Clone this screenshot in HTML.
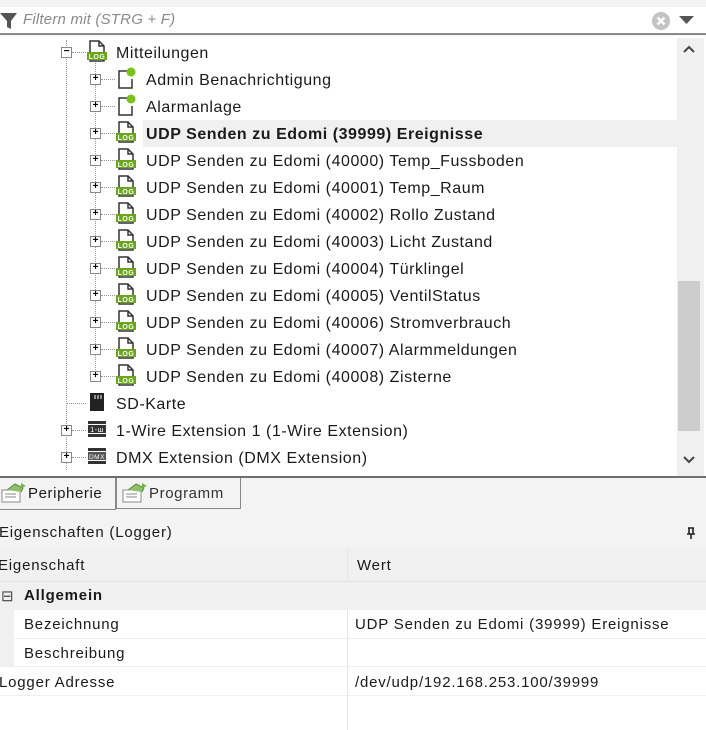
<!DOCTYPE html>
<html><head><meta charset="utf-8"><style>
*{margin:0;padding:0;box-sizing:border-box}
body{width:706px;height:730px;background:#f3f3f3;font-family:"Liberation Sans",sans-serif;font-size:16px;color:#1a1a1a;position:relative;overflow:hidden;letter-spacing:0.55px}
.a{position:absolute;white-space:nowrap}
.row{position:absolute;height:27px;line-height:27px;white-space:nowrap}
.exp{position:absolute;width:11px;height:11px;border:1px solid #888;background:#fff;font-size:10px;line-height:8px;text-align:center;color:#000;font-weight:bold;letter-spacing:0}
.hd{position:absolute;border-top:1px dotted #999;width:12px;height:0}
.p{font-size:15px;letter-spacing:0.8px}
</style></head><body>
<div class="a" style="left:0;top:7px;width:706px;height:28px;background:#fff;border-bottom:2px solid #8a8a8a"></div>
<svg class="a" style="left:0;top:12px" width="18" height="18"><path d="M0 1H17L11 9V17L7 15V9Z" fill="#555"/></svg>
<div class="a" style="left:23px;top:11px;font-style:italic;color:#8a8a8a;font-size:15px;letter-spacing:0.2px">Filtern mit (STRG + F)</div>
<svg class="a" style="left:651px;top:11px" width="20" height="20"><circle cx="10" cy="10" r="9" fill="#c3c3c3"/><path d="M6.5 6.5L13.5 13.5M13.5 6.5L6.5 13.5" stroke="#fff" stroke-width="2.5"/></svg>
<svg class="a" style="left:679px;top:15px" width="16" height="10"><path d="M0 1H15L7.5 9Z" fill="#555"/></svg>
<div class="a" style="left:0;top:36px;width:706px;height:440px;background:#fff"></div>
<div class="a" style="left:677px;top:38px;width:27px;height:438px;background:#f0f0f0"></div>
<div class="a" style="left:678px;top:281px;width:22px;height:150px;background:#cdcdcd"></div>
<svg class="a" style="left:682px;top:44px" width="14" height="10"><path d="M2 8L7 3L12 8" stroke="#444" stroke-width="2" fill="none"/></svg>
<svg class="a" style="left:682px;top:455px" width="14" height="10"><path d="M2 2L7 7L12 2" stroke="#444" stroke-width="2" fill="none"/></svg>
<div class="a" style="left:143px;top:120px;width:534px;height:27px;background:#f0f0f0"></div>
<div class="a" style="left:66px;top:40px;height:430px;border-left:1px dotted #999"></div>
<div class="a" style="left:95px;top:60px;height:316px;border-left:1px dotted #999"></div>
<div id="tree"></div>
<div class="a" style="left:0;top:476px;width:706px;height:2px;background:#6e6e6e"></div>
<div class="a" style="left:0;top:478px;width:116px;height:32px;background:#f3f3f3;border-right:1px solid #888;border-bottom:1px solid #888"></div>
<div class="a" style="left:116px;top:478px;width:125px;height:31px;border:1px solid #888;border-top:none;background:#f3f3f3"></div>
<div class="a" style="left:28px;top:485px;font-size:15px;letter-spacing:0.6px">Peripherie</div>
<div class="a" style="left:149px;top:485px;font-size:15px;color:#333;letter-spacing:0.6px">Programm</div>
<svg class="a" style="left:1px;top:482px" width="26" height="22"><rect x="1" y="8" width="18" height="12" fill="#fff" stroke="#888"/><path d="M4 12H15M4 15H15" stroke="#888"/><path d="M6 8L14 2L22 6L20 10" fill="#8fbf6a" stroke="#5a8f3a"/><path d="M20 1L25 4L20 6Z" fill="#6bb83d"/></svg>
<svg class="a" style="left:122px;top:482px" width="26" height="22"><rect x="1" y="8" width="18" height="12" fill="#fff" stroke="#888"/><path d="M4 12H15M4 15H15" stroke="#888"/><path d="M6 8L14 2L22 6L20 10" fill="#8fbf6a" stroke="#5a8f3a"/><path d="M20 1L25 4L20 6Z" fill="#6bb83d"/></svg>
<div class="a p" style="left:-1px;top:524px">Eigenschaften (Logger)</div>
<svg class="a" style="left:686px;top:527px" width="10" height="12"><path d="M2 1H8M3 1V7M7 1V7M1 7H9M5 7V12" stroke="#222" stroke-width="1.6" fill="none"/></svg>
<div class="a" style="left:0;top:548px;width:706px;height:182px;background:#fff"></div>
<div class="a" style="left:0;top:548px;width:706px;height:34px;background:#f0f0f0;border-bottom:1px solid #e2e2e2"></div>
<div class="a" style="left:347px;top:548px;width:1px;height:182px;background:#e6e6e6"></div>
<div class="a p" style="left:-2px;top:557px">Eigenschaft</div>
<div class="a p" style="left:357px;top:557px">Wert</div>
<div class="a" style="left:0;top:582px;width:706px;height:28px;background:#f0f0f0"></div>
<div class="a" style="left:0;top:610px;width:14px;height:57px;background:#f0f0f0"></div>
<div class="a" style="left:0;top:638px;width:706px;height:1px;background:#f0f0f0"></div>
<div class="a" style="left:0;top:666px;width:706px;height:1px;background:#f0f0f0"></div>
<div class="a" style="left:0;top:695px;width:706px;height:1px;background:#f0f0f0"></div>
<div class="a" style="left:1px;top:587px;font-size:15px;color:#444">⊟</div>
<div class="a p" style="left:24px;top:587px;font-weight:bold">Allgemein</div>
<div class="a p" style="left:24px;top:616px">Bezeichnung</div>
<div class="a p" style="left:355px;top:616px">UDP Senden zu Edomi (39999) Ereignisse</div>
<div class="a p" style="left:24px;top:645px">Beschreibung</div>
<div class="a p" style="left:-1px;top:674px">Logger Adresse</div>
<div class="a p" style="left:355px;top:674px">/dev/udp/192.168.253.100/39999</div>
<script>
const LOG='<svg width="22" height="22"><path d="M4 1H13L18 6V21H4Z" fill="#fff" stroke="#333" stroke-width="1.5"/><path d="M13 1V6H18" fill="none" stroke="#333" stroke-width="1.5"/><rect x="1" y="12" width="20" height="8" fill="#6aa51e"/><text x="11" y="19" font-size="7" font-family=\'Liberation Sans\' font-weight="bold" fill="#fff" text-anchor="middle">LOG</text></svg>';
const MSG='<svg width="22" height="22"><path d="M12 4H4V21H17V12" fill="none" stroke="#333" stroke-width="1.5"/><circle cx="16" cy="5" r="4.5" fill="#7ac11a"/></svg>';
const SD='<svg width="22" height="22"><path d="M4 2H18V20H4V7Z" fill="#222"/><path d="M9 4V8M12 4V8M15 4V8" stroke="#fff"/></svg>';
const W1='<svg width="22" height="22"><rect x="2" y="3" width="18" height="3" fill="#333"/><rect x="2" y="7" width="18" height="8" fill="#333"/><text x="11" y="14" font-size="7" fill="#fff" text-anchor="middle" font-family=\'Liberation Sans\'>1-ш</text><rect x="2" y="16" width="18" height="3" fill="#333"/></svg>';
const DMX='<svg width="22" height="22"><rect x="2" y="3" width="18" height="3" fill="#333"/><rect x="2" y="7" width="18" height="8" fill="#555"/><text x="11" y="14" font-size="6.5" fill="#fff" text-anchor="middle" font-family=\'Liberation Sans\'>DMX</text><rect x="2" y="16" width="18" height="3" fill="#333"/></svg>';
let rows=[
[0,'Mitteilungen',LOG,'-'],
[1,'Admin Benachrichtigung',MSG,'+'],
[1,'Alarmanlage',MSG,'+'],
[1,'<b>UDP Senden zu Edomi (39999) Ereignisse</b>',LOG,'+'],
[1,'UDP Senden zu Edomi (40000) Temp_Fussboden',LOG,'+'],
[1,'UDP Senden zu Edomi (40001) Temp_Raum',LOG,'+'],
[1,'UDP Senden zu Edomi (40002) Rollo Zustand',LOG,'+'],
[1,'UDP Senden zu Edomi (40003) Licht Zustand',LOG,'+'],
[1,'UDP Senden zu Edomi (40004) Türklingel',LOG,'+'],
[1,'UDP Senden zu Edomi (40005) VentilStatus',LOG,'+'],
[1,'UDP Senden zu Edomi (40006) Stromverbrauch',LOG,'+'],
[1,'UDP Senden zu Edomi (40007) Alarmmeldungen',LOG,'+'],
[1,'UDP Senden zu Edomi (40008) Zisterne',LOG,'+'],
[0,'SD-Karte',SD,''],
[0,'1-Wire Extension 1 (1-Wire Extension)',W1,'+'],
[0,'DMX Extension (DMX Extension)',DMX,'+']];
let h='';
rows.forEach((r,i)=>{
 const cy=52+27*i, lvl=r[0];
 const ex=lvl?90:61, ic=lvl?115:86, tx=lvl?146:116;
 if(r[3]) h+=`<div class="exp" style="left:${ex}px;top:${cy-5}px">${r[3]=='-'?'−':'+'}</div>`;
 h+=`<div class="hd" style="left:${ex+(r[3]?11:5)}px;top:${cy}px;width:${ic-ex-(r[3]?11:5)}px"></div>`;
 h+=`<div class="a" style="left:${ic}px;top:${cy-12}px">${r[2]}</div>`;
 h+=`<div class="row" style="left:${tx}px;top:${cy-12}px">${r[1]}</div>`;
});
document.getElementById('tree').innerHTML=h;
</script>
</body></html>
